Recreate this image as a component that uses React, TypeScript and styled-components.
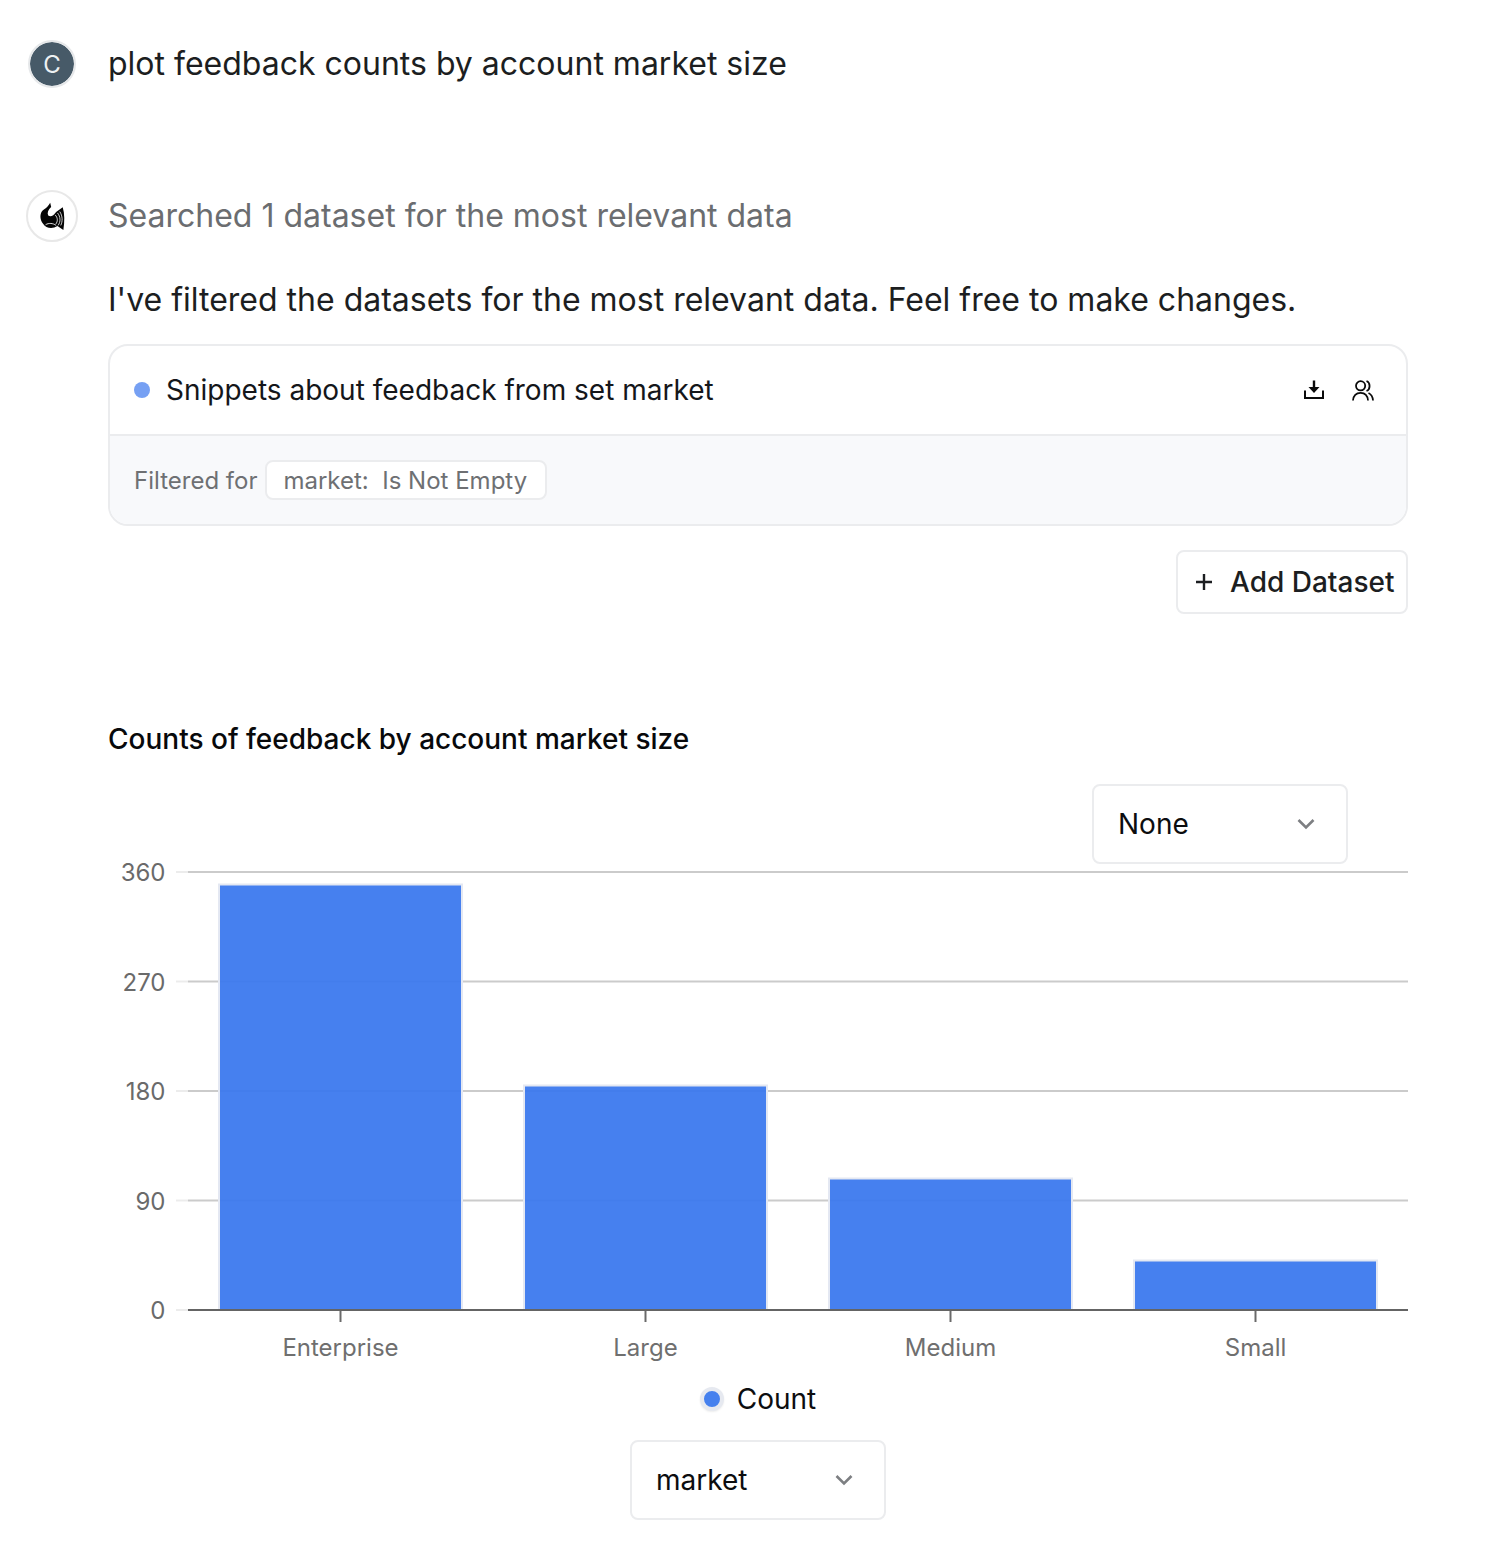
import React from "react";
import styled, { createGlobalStyle } from "styled-components";

const Global = createGlobalStyle`
  html, body { margin: 0; padding: 0; background: #fff; }
  body { font-family: Inter, "Liberation Sans", sans-serif; color: #1a1c1f; }
`;

const Page = styled.div`
  width: 1488px;
  height: 1560px;
  box-sizing: border-box;
  padding: 40px 80px 0 26px;
  display: flex;
  flex-direction: column;
`;

const Row = styled.div<{ $gap?: number }>`
  display: flex;
  align-items: flex-start;
  margin-bottom: ${(p) => p.$gap ?? 0}px;
`;

const AvatarCol = styled.div`
  width: 82px;
  flex: none;
  display: flex;
  padding-left: 2px;
  box-sizing: border-box;
`;

const UserAvatar = styled.div`
  width: 48px;
  height: 48px;
  box-sizing: border-box;
  border-radius: 50%;
  border: 2px solid #e6e8ea;
  background: #475a68;
  background-clip: padding-box;
  color: #eef1f3;
  font-size: 24px;
  display: flex;
  align-items: center;
  justify-content: center;
`;

const BotAvatar = styled.div`
  width: 52px;
  height: 52px;
  margin-left: -2px;
  box-sizing: border-box;
  border-radius: 50%;
  border: 2px solid #e8e8e8;
  background: #fff;
  display: flex;
  align-items: center;
  justify-content: center;
`;

const Prompt = styled.div`
  font-size: 32px;
  line-height: 48px;
  color: #1c1e21;
`;

const Content = styled.div`
  width: 1300px;
  flex: none;
  display: flex;
  flex-direction: column;
`;

const Status = styled.div`
  font-size: 32px;
  line-height: 52px;
  color: #6b6d70;
`;

const Lead = styled.div`
  font-size: 32px;
  line-height: 48px;
  margin-top: 34px;
  color: #1c1e21;
`;

const Card = styled.div`
  margin-top: 20px;
  box-sizing: border-box;
  height: 182px;
  border: 2px solid #ebecee;
  border-radius: 20px;
  overflow: hidden;
  display: flex;
  flex-direction: column;
`;

const CardHead = styled.div`
  height: 90px;
  flex: none;
  box-sizing: border-box;
  border-bottom: 2px solid #ebecee;
  display: flex;
  align-items: center;
  padding: 0 32px 0 24px;
`;

const Dot = styled.span`
  width: 16px;
  height: 16px;
  border-radius: 50%;
  background: #76a0f3;
  flex: none;
  margin-right: 16px;
`;

const CardTitle = styled.div`
  flex: 1;
  font-size: 28px;
  color: #14161a;
`;

const IconSet = styled.div`
  display: flex;
  align-items: center;
  gap: 28px;
`;

const CardFoot = styled.div`
  flex: 1;
  background: #f8f9fb;
  display: flex;
  align-items: center;
  padding: 0 24px;
  gap: 8px;
  font-size: 24px;
  color: #6e7073;
`;

const Chip = styled.div`
  height: 40px;
  box-sizing: border-box;
  border: 2px solid #ebecee;
  border-radius: 8px;
  background: #fff;
  padding: 0 18px 0 16px;
  display: flex;
  align-items: center;
  white-space: pre;
`;

const Actions = styled.div`
  display: flex;
  justify-content: flex-end;
  margin-top: 24px;
`;

const AddButton = styled.button`
  height: 64px;
  width: 232px;
  box-sizing: border-box;
  border: 2px solid #ebecee;
  border-radius: 8px;
  background: #fff;
  padding: 0 0 0 16px;
  display: flex;
  align-items: center;
  gap: 16px;
  font-family: inherit;
  font-size: 28px;
  font-weight: 500;
  white-space: nowrap;
  color: #1c1e21;
`;

const ChartTitle = styled.div`
  margin-top: 105px;
  font-size: 28px;
  line-height: 40px;
  font-weight: 500;
  color: #08090b;
`;

const TopControls = styled.div`
  display: flex;
  justify-content: flex-end;
  padding-right: 60px;
  margin-top: 25px;
`;

const Select = styled.div`
  width: 256px;
  height: 80px;
  box-sizing: border-box;
  border: 2px solid #ebecee;
  border-radius: 8px;
  background: #fff;
  display: flex;
  align-items: center;
  justify-content: space-between;
  padding: 0 30px 0 24px;
  font-size: 28px;
  color: #0c0d0f;
`;

const ChartFrame = styled.svg`
  display: block;
  overflow: visible;
  margin: 0 0 0 -108px;
  font-family: Inter, "Liberation Sans", sans-serif;
`;

const Legend = styled.div`
  margin-top: 15px;
  display: flex;
  align-items: center;
  justify-content: center;
  gap: 13px;
  font-size: 28px;
  line-height: 40px;
  color: #0c0d0f;
`;

const LegendDot = styled.span`
  width: 16px;
  height: 16px;
  border-radius: 50%;
  background: #4580ee;
  border: 4px solid #e6e9f0;
  box-shadow: 0 1px 2px rgba(0, 0, 0, 0.08);
  flex: none;
`;

const BottomControls = styled.div`
  display: flex;
  justify-content: center;
  margin-top: 21px;
`;

const Chevron = () => (
  <svg width="20" height="12" viewBox="0 0 20 12" fill="none">
    <path d="M2.5 2 L10 9.5 L17.5 2" stroke="#7d7f82" strokeWidth="2.6" />
  </svg>
);

const Logo = () => (
  <svg width="27" height="29" viewBox="85 545 80 88">
    <path
      d="M118 547 L121 560 C112 568 108 578 112 586 C120 592 128 586 136 575 L156 561 C162 580 162 605 158 630 L140 618 C125 628 105 625 97 612 C85 598 85 575 100 567 C108 562 113 556 118 547 Z"
      fill="#050505"
    />
    <path d="M140 578 C150 590 150 605 142 616 M147 574 C156 588 156 604 150 616 M133 584 C142 594 141 604 135 612" stroke="#fff" strokeWidth="2.4" fill="none" />
    <path d="M104 614 C114 608 126 609 136 616" stroke="#fff" strokeWidth="2.6" fill="none" />
  </svg>
);

const DownloadIcon = () => (
  <svg width="20" height="20" viewBox="0 0 20 20" fill="none">
    <path d="M1 10.5 V18 H19 V10.5" stroke="#0b0b0b" strokeWidth="2" fill="none" />
    <path d="M10 0.5 V8" stroke="#0b0b0b" strokeWidth="2.4" />
    <path d="M4.5 7 H15.5 L10 13 Z" fill="#0b0b0b" />
  </svg>
);

const UsersIcon = () => (
  <svg width="22" height="21" viewBox="0 0 22 21" fill="none" stroke="#0b0b0b" strokeWidth="1.8">
    <circle cx="8.6" cy="5.8" r="4.6" />
    <path d="M1 20.5 C1.5 15 5 12.8 8.6 12.8 C12.2 12.8 15.6 15 16 20.5" />
    <path d="M14.5 1 C18.6 2.5 18.6 9.5 14.5 11" />
    <path d="M16.5 13 C19.5 14.5 20.8 17 21 20.5" />
  </svg>
);

const grid = [
  { y: 872, label: "360" },
  { y: 981.5, label: "270" },
  { y: 1091, label: "180" },
  { y: 1200.5, label: "90" },
];

const bars = [
  { x: 219, top: 884.5, label: "Enterprise" },
  { x: 524, top: 1085.5, label: "Large" },
  { x: 829, top: 1178.5, label: "Medium" },
  { x: 1134, top: 1260.5, label: "Small" },
];

const CHART_TOP = 864;

const Chart = () => (
  <ChartFrame width="1408" height="500" viewBox={`0 ${CHART_TOP} 1408 500`}>
    {grid.map((g) => (
      <g key={g.label}>
        <line x1="176" x2="188" y1={g.y} y2={g.y} stroke="#ececec" strokeWidth="2" />
        <line x1="188" x2="1408" y1={g.y} y2={g.y} stroke="#cbcbcb" strokeWidth="2" />
        <text x="165.5" y={g.y + 9} textAnchor="end" fontSize="24" fill="#6a6a6a">{g.label}</text>
      </g>
    ))}
    <text x="165.5" y="1319" textAnchor="end" fontSize="24" fill="#6a6a6a">0</text>
    {bars.map((b) => (
      <g key={b.label}>
        <rect x={b.x} y={b.top} width="243" height={1310 - b.top} fill="#3a78ee" fillOpacity="0.94" stroke="#e4e8f2" strokeWidth="2" />
        <line x1={b.x + 121.5} x2={b.x + 121.5} y1="1310" y2="1322" stroke="#6a6a6a" strokeWidth="2" />
        <text x={b.x + 121.5} y="1355.5" textAnchor="middle" fontSize="24" fill="#6f6f6f">{b.label}</text>
      </g>
    ))}
    <line x1="176" x2="188" y1="1310" y2="1310" stroke="#ececec" strokeWidth="2" />
    <line x1="188" x2="1408" y1="1310" y2="1310" stroke="#646464" strokeWidth="2" />
  </ChartFrame>
);

export default function App() {
  return (
    <Page>
      <Global />
      <Row $gap={102}>
        <AvatarCol>
          <UserAvatar>C</UserAvatar>
        </AvatarCol>
        <Prompt>plot feedback counts by account market size</Prompt>
      </Row>
      <Row>
        <AvatarCol>
          <BotAvatar>
            <Logo />
          </BotAvatar>
        </AvatarCol>
        <Content>
          <Status>Searched 1 dataset for the most relevant data</Status>
          <Lead>I've filtered the datasets for the most relevant data. Feel free to make changes.</Lead>
          <Card>
            <CardHead>
              <Dot />
              <CardTitle>Snippets about feedback from set market</CardTitle>
              <IconSet>
                <DownloadIcon />
                <UsersIcon />
              </IconSet>
            </CardHead>
            <CardFoot>
              Filtered for
              <Chip>market:  Is Not Empty</Chip>
            </CardFoot>
          </Card>
          <Actions>
            <AddButton>
              <svg width="20" height="20" viewBox="0 0 20 20" stroke="#1c1e21" strokeWidth="2.4">
                <path d="M10 2 V18 M2 10 H18" />
              </svg>
              Add Dataset
            </AddButton>
          </Actions>
          <ChartTitle>Counts of feedback by account market size</ChartTitle>
          <TopControls>
            <Select>
              None
              <Chevron />
            </Select>
          </TopControls>
          <Chart />
          <Legend>
            <LegendDot />
            Count
          </Legend>
          <BottomControls>
            <Select>
              market
              <Chevron />
            </Select>
          </BottomControls>
        </Content>
      </Row>
    </Page>
  );
}
